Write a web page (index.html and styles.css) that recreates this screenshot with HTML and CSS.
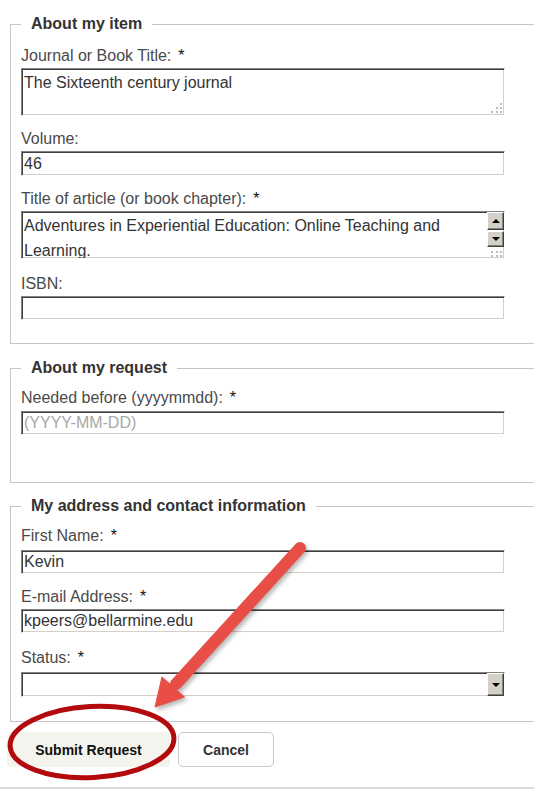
FILE: index.html
```html
<!DOCTYPE html>
<html lang="en">
<head>
<meta charset="utf-8">
<title>Request form</title>
<link rel="stylesheet" href="styles.css">
</head>
<body>
<div class="page">
  <form class="form">
    <fieldset class="group group-item">
      <legend>About my item</legend>
      <div class="field f-first">
        <label>Journal or Book Title:<span class="req">*</span></label>
        <div class="ta-wrap">
          <textarea class="ta ta-short">The Sixteenth century journal</textarea>
          <svg class="grip grip-3" width="12" height="12" viewBox="0 0 12 12"><rect x="9" y="1" width="2" height="2"/><rect x="5" y="5" width="2" height="2"/><rect x="9" y="5" width="2" height="2"/><rect x="0" y="9" width="2" height="2"/><rect x="5" y="9" width="2" height="2"/><rect x="9" y="9" width="2" height="2"/></svg>
        </div>
      </div>
      <div class="field f-vol">
        <label>Volume:</label>
        <input class="txt h25" type="text" value="46">
      </div>
      <div class="field f-title">
        <label>Title of article (or book chapter):<span class="req">*</span></label>
        <div class="ta-wrap">
          <textarea class="ta ta-scroll">Adventures in Experiential Education: Online Teaching and Learning.</textarea>
          <span class="sbtn sbtn-up"><span class="tri-up"></span></span>
          <span class="sbtn sbtn-down"><span class="tri-down"></span></span>
          <svg class="grip grip-2" width="12" height="8" viewBox="0 0 12 8"><rect x="0" y="1" width="2" height="2"/><rect x="5" y="1" width="2" height="2"/><rect x="9" y="1" width="2" height="2"/><rect x="0" y="5" width="2" height="2"/><rect x="5" y="5" width="2" height="2"/><rect x="9" y="5" width="2" height="2"/></svg>
        </div>
      </div>
      <div class="field f-isbn">
        <label>ISBN:</label>
        <input class="txt h24" type="text" value="">
      </div>
    </fieldset>

    <fieldset class="group group-request">
      <legend>About my request</legend>
      <div class="field f-needed">
        <label>Needed before (yyyymmdd):<span class="req">*</span></label>
        <input class="txt h24" type="text" placeholder="(YYYY-MM-DD)">
      </div>
    </fieldset>

    <fieldset class="group group-contact">
      <legend>My address and contact information</legend>
      <div class="field f-name">
        <label>First Name:<span class="req">*</span></label>
        <input class="txt h24" type="text" value="Kevin">
      </div>
      <div class="field f-email">
        <label>E-mail Address:<span class="req">*</span></label>
        <input class="txt h24" type="text" value="kpeers@bellarmine.edu">
      </div>
      <div class="field f-status">
        <label>Status:<span class="req">*</span></label>
        <div class="sel-wrap">
          <select class="sel"><option></option></select>
          <span class="sel-btn"><span class="tri-down"></span></span>
        </div>
      </div>
    </fieldset>

    <div class="actions">
      <button type="button" class="btn btn-submit">Submit Request</button>
      <button type="button" class="btn btn-cancel">Cancel</button>
    </div>
  </form>
  <div class="footer-line"></div>

  <svg class="annotations" width="534" height="789" viewBox="0 0 534 789">
    <g class="arrow">
      <line x1="300" y1="548" x2="176" y2="684" stroke="#e84d46" stroke-width="12" stroke-linecap="round"/>
      <polygon points="155,707 162,677 184.5,697" fill="#e84d46" stroke="#e84d46" stroke-width="1" stroke-linejoin="round"/>
    </g>
    <ellipse cx="92" cy="742" rx="82" ry="35.5" transform="rotate(-3 92 742)" fill="none" stroke="#b30a0e" stroke-width="5"/>
  </svg>
</div>
</body>
</html>
```
FILE: styles.css
```css
html, body {
  margin: 0;
  padding: 0;
  overflow: hidden;
  background: #ffffff;
}

body {
  font-family: "Liberation Sans", Arial, sans-serif;
  font-size: 16px;
  color: #4a4a4a;
}

.page {
  position: relative;
  width: 534px;
  height: 789px;
  padding-top: 15px;
  box-sizing: border-box;
  overflow: hidden;
}

.form {
  width: 534px;
}

.group {
  margin: 0 0 0 10px;
  border: 1px solid #c4c4c4;
  border-right: none;
  padding: 0 10px 23px 10px;
  min-width: 0;
}

.group legend {
  padding: 0 10px;
  font-weight: bold;
  font-size: 16px;
  line-height: 18px;
  color: #333333;
}

.group-request {
  margin-top: 15px;
  padding-bottom: 47px;
}

.group-contact {
  margin-top: 14px;
  padding-bottom: 24px;
}

.field label {
  display: block;
  height: 18px;
  line-height: 18px;
  margin-bottom: 3px;
  white-space: nowrap;
}

.req {
  margin-left: 7px;
  color: #111111;
}

.f-first { margin-top: 14px; }
.f-vol { margin-top: 14px; }
.f-title { margin-top: 14px; }
.f-isbn { margin-top: 16px; }
.f-needed { margin-top: 12px; }
.f-needed label { margin-bottom: 4px; }
.f-name { margin-top: 12px; }
.f-name label { margin-bottom: 5px; }
.f-email { margin-top: 14px; }
.f-status { margin-top: 16px; }
.f-status label { margin-bottom: 5px; }

.txt, .ta, .sel {
  display: block;
  box-sizing: border-box;
  width: 484px;
  margin: 0;
  font-family: "Liberation Sans", Arial, sans-serif;
  font-size: 16px;
  color: #333333;
  background: #ffffff;
  border: 1px solid;
  border-color: #808080 #ffffff #ffffff #808080;
  box-shadow: inset 1px 1px 0 #404040, inset -1px -1px 0 #d4d0c8;
  outline: none;
  border-radius: 0;
}

.txt {
  padding: 0 2px;
}

.txt::placeholder {
  color: #a8a8a8;
  opacity: 1;
}

.h25 { height: 25px; }
.h24 { height: 24px; }

.ta-wrap,
.sel-wrap {
  position: relative;
  width: 484px;
}

.ta {
  resize: none;
  overflow: hidden;
  line-height: 25px;
  padding: 1px 2px 0 2px;
  height: 48px;
}

.ta-scroll {
  padding-right: 22px;
}

.grip {
  position: absolute;
  right: 2px;
  fill: #bdbdbd;
}

.grip-3 { bottom: 2px; }
.grip-2 { bottom: 1px; }

.sbtn,
.sel-btn {
  position: absolute;
  right: 1px;
  width: 17px;
  box-sizing: border-box;
  background: #d4d0c8;
  border: 1px solid;
  border-color: #ffffff #404040 #404040 #ffffff;
  box-shadow: inset -1px -1px 0 #808080;
  display: flex;
  align-items: center;
  justify-content: center;
}

.sbtn-up { top: 1px; height: 18px; }
.sbtn-down { top: 20px; height: 16px; }

.sel-btn {
  top: 1px;
  bottom: 1px;
}

.tri-up {
  width: 0;
  height: 0;
  border-left: 4px solid transparent;
  border-right: 4px solid transparent;
  border-bottom: 4px solid #000000;
}

.tri-down {
  width: 0;
  height: 0;
  border-left: 4px solid transparent;
  border-right: 4px solid transparent;
  border-top: 4px solid #000000;
}

.sel {
  height: 25px;
  appearance: none;
  -webkit-appearance: none;
  padding: 0 2px;
}

.actions {
  display: flex;
  gap: 8px;
  margin: 10px 0 0 7px;
}

.btn {
  height: 35px;
  font-family: "Liberation Sans", Arial, sans-serif;
  font-weight: bold;
  font-size: 14px;
  color: #111111;
  cursor: pointer;
}

.btn-submit {
  width: 163px;
  background: #f4f4ee;
  border: none;
  border-radius: 4px;
}

.btn-cancel {
  width: 96px;
  background: #ffffff;
  border: 1px solid #c8c8c8;
  border-radius: 5px;
  color: #333333;
}

.footer-line {
  margin-top: 20px;
  height: 3px;
  background: #d9d9d9;
}

.annotations {
  position: absolute;
  left: 0;
  top: 0;
  pointer-events: none;
}

.arrow {
  filter: drop-shadow(2px 3px 2px rgba(0, 0, 0, 0.28));
}
```
